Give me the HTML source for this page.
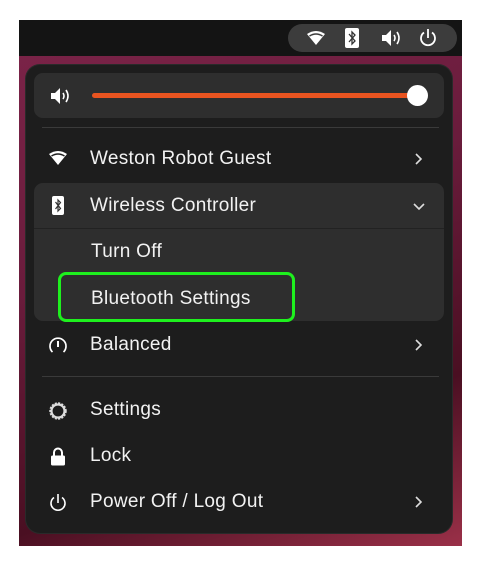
<!DOCTYPE html>
<html><head><style>
*{margin:0;padding:0;box-sizing:border-box}
body{width:480px;height:570px;background:#fff;position:relative;overflow:hidden;font-family:"Liberation Sans",sans-serif;color:#f2f2f2}
.frame{position:absolute;left:19px;top:20px;width:443px;height:526px;background:linear-gradient(160deg,#7c2449 0%,#6a1c3c 40%,#4a0f22 75%,#9a3048 100%);overflow:hidden}
.bar{position:absolute;left:0;top:0;width:443px;height:36px;background:#141414}
.pill{position:absolute;left:269px;top:4px;width:169px;height:28px;border-radius:14px;background:#3c3c3c}
.menu{position:absolute;left:7px;top:45px;width:426px;height:468px;background:#1d1d1d;border-radius:14px;box-shadow:0 0 0 1px #2a2a2a}
.card{position:absolute;left:8px;width:410px;background:#2e2e2e;border-radius:9px}
.row{position:absolute;left:0;width:426px;height:40px;font-size:19px;letter-spacing:0.3px;line-height:40px}
.row .t{position:absolute;left:64px}
.row .ic{position:absolute;left:22px;top:11px}
.chev{position:absolute;left:388px;top:13px}
.div{position:absolute;left:16px;width:397px;height:1px;background:#3a3a3a}
</style></head><body>
<div class="frame">
<div class="bar"><div class="pill">
<svg style="position:absolute;left:18px;top:6px" width="20" height="16" viewBox="0 0 20 16"><path d="M10 15 L1 4 Q10 -2 19 4 Z" fill="#fff"/><path d="M3.5 6 Q10 2 16.5 6" stroke="#3c3c3c" stroke-width="1.5" fill="none"/></svg>
<svg style="position:absolute;left:57px;top:4px" width="14" height="20" viewBox="0 0 14 20"><rect x="0" y="0" width="14" height="20" rx="2" fill="#fff"/><path d="M4 6 L10 13 L7 16 V4 L10 7 L4 14" stroke="#333" stroke-width="1.3" fill="none"/></svg>
<svg style="position:absolute;left:93px;top:5px" width="22" height="18" viewBox="0 0 22 18"><path d="M1 6 H5 L10 1 V17 L5 12 H1 Z" fill="#fff"/><path d="M13 6 Q15 9 13 12 M16 3 Q20 9 16 15" stroke="#fff" stroke-width="1.6" fill="none"/></svg>
<svg style="position:absolute;left:130px;top:4px" width="20" height="20" viewBox="0 0 20 20"><path d="M6 4.5 A7 7 0 1 0 14 4.5" stroke="#fff" stroke-width="1.8" fill="none"/><path d="M10 1 V10" stroke="#fff" stroke-width="1.8"/></svg>
</div></div>
<div class="menu">
<div class="card" style="top:8px;height:45px">
<svg style="position:absolute;left:16px;top:14px" width="22" height="18" viewBox="0 0 22 18"><path d="M1 6 H5 L10 1 V17 L5 12 H1 Z" fill="#fff"/><path d="M13 6 Q15 9 13 12 M16 3 Q20 9 16 15" stroke="#fff" stroke-width="1.6" fill="none"/></svg>
<div style="position:absolute;left:58px;top:20px;width:330px;height:5px;border-radius:3px;background:#e95420"></div>
<div style="position:absolute;left:373px;top:12px;width:21px;height:21px;border-radius:50%;background:#fff"></div>
</div>
<div class="div" style="top:62px"></div>
<div class="row" style="top:74px"><svg class="ic" width="20" height="16" viewBox="0 0 20 16"><path d="M10 15 L1 4 Q10 -2 19 4 Z" fill="#fff"/><path d="M3.5 6 Q10 2 16.5 6" stroke="#1d1d1d" stroke-width="1.5" fill="none"/></svg><span class="t">Weston Robot Guest</span><svg class="chev" width="10" height="14" viewBox="0 0 10 14"><path d="M2 2 L7 7 L2 12" stroke="#ddd" stroke-width="1.6" fill="none"/></svg></div>
<div class="card" style="top:118px;height:138px">
<div style="position:absolute;left:0;top:45px;width:410px;height:1px;background:#222"></div>
</div>
<div class="row" style="top:121px"><svg class="ic" style="left:26px;top:10px" width="12" height="19" viewBox="0 0 12 19"><rect width="12" height="19" rx="2" fill="#fff"/><path d="M3.5 6 L8.5 12.5 L6 15 V4 L8.5 6.5 L3.5 13" stroke="#333" stroke-width="1.2" fill="none"/></svg><span class="t">Wireless Controller</span><svg class="chev" style="left:386px;top:16px" width="14" height="10" viewBox="0 0 14 10"><path d="M2 2 L7 7 L12 2" stroke="#ddd" stroke-width="1.6" fill="none"/></svg></div>
<div class="row" style="top:167px"><span class="t" style="left:65px">Turn Off</span></div>
<div class="row" style="top:214px"><span class="t" style="left:65px">Bluetooth Settings</span></div>
<div style="position:absolute;left:32px;top:207px;width:237px;height:50px;border:3px solid #1ef01e;border-radius:8px"></div>
<div class="row" style="top:260px"><svg class="ic" width="20" height="20" viewBox="0 0 20 20"><path d="M4.5 16 A8 8 0 1 1 15.5 16" stroke="#fff" stroke-width="1.7" fill="none"/><path d="M10 5 V11" stroke="#fff" stroke-width="2"/></svg><span class="t">Balanced</span><svg class="chev" width="10" height="14" viewBox="0 0 10 14"><path d="M2 2 L7 7 L2 12" stroke="#ddd" stroke-width="1.6" fill="none"/></svg></div>
<div class="div" style="top:311px"></div>
<div class="row" style="top:325px"><svg class="ic" width="20" height="20" viewBox="0 0 20 20"><circle cx="10" cy="10" r="7.5" fill="none" stroke="#ddd" stroke-width="2.5" stroke-dasharray="2 1.2"/><circle cx="10" cy="10" r="6.5" fill="none" stroke="#ddd" stroke-width="2.2"/></svg><span class="t">Settings</span></div>
<div class="row" style="top:371px"><svg class="ic" style="left:24px" width="16" height="19" viewBox="0 0 16 19"><path d="M4 9 V5.5 A4 4 0 0 1 12 5.5 V9" stroke="#fff" stroke-width="2" fill="none"/><rect x="1" y="8.5" width="14" height="10" rx="1.5" fill="#fff"/></svg><span class="t">Lock</span></div>
<div class="row" style="top:417px"><svg class="ic" width="20" height="20" viewBox="0 0 20 20"><path d="M6 4.5 A7 7 0 1 0 14 4.5" stroke="#fff" stroke-width="1.6" fill="none"/><path d="M10 1 V10" stroke="#fff" stroke-width="1.6"/></svg><span class="t">Power Off / Log Out</span><svg class="chev" width="10" height="14" viewBox="0 0 10 14"><path d="M2 2 L7 7 L2 12" stroke="#ddd" stroke-width="1.6" fill="none"/></svg></div>
</div>
</div>
</body></html>
